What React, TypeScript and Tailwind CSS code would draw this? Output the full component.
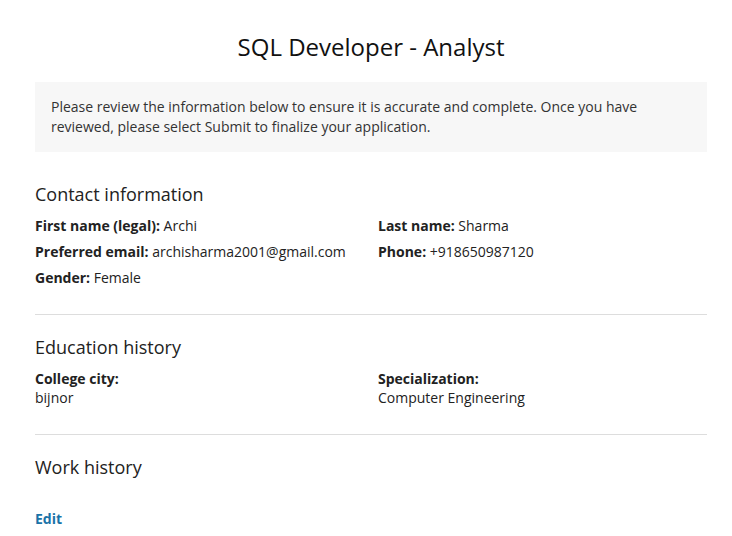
import React from "react"

const font = { fontFamily: "'Open Sans', 'Noto Sans', sans-serif" }

const Field = ({ label, value }: { label: string; value: string }) => (
    <div className="text-[14px] leading-[26px] text-[#222]">
        <span className="font-bold">{label}</span> {value}
    </div>
)

const StackField = ({ label, value }: { label: string; value: string }) => (
    <div className="flex flex-col text-[14px] leading-[19px] text-[#222]">
        <span className="font-bold">{label}</span>
        <span>{value}</span>
    </div>
)

const Heading = ({ children }: { children: React.ReactNode }) => (
    <div className="text-[18px] leading-[26px] text-[#222]">{children}</div>
)

const App = () => {
    return (
        <div className="bg-white min-h-screen w-full" style={font}>
            <div className="ml-[35px] mr-[25px] flex flex-col">
                <div className="pt-[31px] text-center text-[24px] leading-[32px] text-[#111]">SQL Developer - Analyst</div>
                <div className="mt-[19px] bg-[#f7f7f7] px-4 py-[15px] text-[14px] leading-[20px] text-[#333]">
                    Please review the information below to ensure it is accurate and complete. Once you have reviewed, please select Submit to finalize your application.
                </div>

                <div className="mt-[29px] pb-[23px] border-b border-[#dddddd]">
                    <Heading>Contact information</Heading>
                    <div className="mt-[6px] grid grid-cols-2 gap-x-[14px]">
                        <Field label="First name (legal):" value="Archi" />
                        <Field label="Last name:" value="Sharma" />
                        <Field label="Preferred email:" value="archisharma2001@gmail.com" />
                        <Field label="Phone:" value="+918650987120" />
                        <Field label="Gender:" value="Female" />
                    </div>
                </div>

                <div className="mt-[19px] pb-[27px] border-b border-[#dddddd]">
                    <Heading>Education history</Heading>
                    <div className="mt-[9px] grid grid-cols-2 gap-x-[14px]">
                        <StackField label="College city:" value="bijnor" />
                        <StackField label="Specialization:" value="Computer Engineering" />
                    </div>
                </div>

                <div className="mt-[19px]">
                    <Heading>Work history</Heading>
                    <div className="mt-[29px] text-[14px] leading-[20px] font-bold text-[#1a73a8]">Edit</div>
                </div>
            </div>
        </div>
    )
}

export default App
